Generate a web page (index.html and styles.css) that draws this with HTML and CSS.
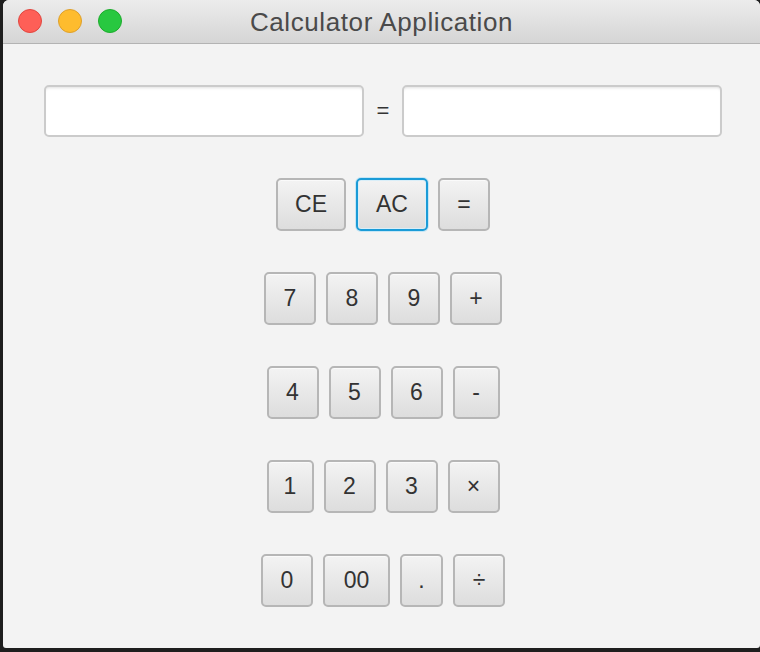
FILE: index.html
```html
<!DOCTYPE html>
<html>
<head>
<meta charset="utf-8">
<link rel="stylesheet" href="styles.css">
</head>
<body>
<div class="window">
  <div class="titlebar">
    <div class="lights">
      <span class="light red"></span>
      <span class="light yellow"></span>
      <span class="light green"></span>
    </div>
    <div class="title">Calculator Application</div>
    <div></div>
  </div>
  <div class="content">
    <div class="fields">
      <div class="field"></div>
      <span class="eq">=</span>
      <div class="field"></div>
    </div>
    <div class="row">
      <button class="key w70">CE</button>
      <button class="key w72 focused">AC</button>
      <button class="key">=</button>
    </div>
    <div class="row">
      <button class="key">7</button>
      <button class="key">8</button>
      <button class="key">9</button>
      <button class="key">+</button>
    </div>
    <div class="row">
      <button class="key">4</button>
      <button class="key">5</button>
      <button class="key">6</button>
      <button class="key w47">-</button>
    </div>
    <div class="row">
      <button class="key w47">1</button>
      <button class="key">2</button>
      <button class="key">3</button>
      <button class="key">×</button>
    </div>
    <div class="row">
      <button class="key">0</button>
      <button class="key w67">00</button>
      <button class="key w43">.</button>
      <button class="key">÷</button>
    </div>
  </div>
</div>
</body>
</html>
```

FILE: styles.css
```css
* { box-sizing: border-box; }
html, body {
  margin: 0;
  padding: 0;
  background: #1e1e1e;
  width: 760px;
  height: 652px;
  overflow: hidden;
  font-family: "Liberation Sans", Arial, sans-serif;
}
.window {
  margin-left: 3px;
  width: 757px;
  height: 648px;
  background: #f3f3f3;
  border-radius: 6px 6px 3px 3px;
  overflow: hidden;
}
.titlebar {
  height: 44px;
  display: grid;
  grid-template-columns: 1fr auto 1fr;
  align-items: center;
  background: linear-gradient(#ececec, #d5d5d5);
  border-bottom: 1px solid #b3b3b3;
}
.lights {
  display: flex;
  gap: 16px;
  padding-left: 15px;
  padding-bottom: 1px;
}
.light {
  width: 24px;
  height: 24px;
  border-radius: 50%;
  display: block;
}
.red { background: #fe5f57; border: 1px solid #e1463f; }
.yellow { background: #febc2e; border: 1px solid #dea02b; }
.green { background: #28c840; border: 1px solid #1dac2c; }
.title {
  font-size: 26px;
  letter-spacing: 0.6px;
  color: #4a4a4a;
  padding-top: 1px;
}
.content {
  padding: 41px 0 0 3px;
  display: flex;
  flex-direction: column;
  align-items: center;
}
.fields {
  display: flex;
  align-items: center;
  gap: 9px;
  margin-bottom: 41px;
}
.field {
  width: 320px;
  height: 52px;
  background: #fff;
  border: 2px solid #cbcbcb;
  border-radius: 5px;
  box-shadow: inset 0 3px 3px -2px rgba(0,0,0,0.12);
}
.eq {
  font-size: 22px;
  color: #333;
  width: 20px;
  text-align: center;
}
.row {
  display: flex;
  gap: 10px;
  margin-bottom: 41px;
}
.key {
  width: 52px;
  height: 53px;
  padding: 0;
  font-family: "Liberation Sans", Arial, sans-serif;
  font-size: 23px;
  color: #333;
  background: linear-gradient(#f3f3f3, #dddddd);
  border: 2px solid #b6b6b6;
  border-radius: 5px;
  box-shadow: inset 0 1px 0 #fafafa;
}
.w70 { width: 70px; }
.w72 { width: 72px; }
.w47 { width: 47px; }
.w67 { width: 67px; }
.w43 { width: 43px; }
.key.focused {
  border-color: #1a9bd7;
  box-shadow: 0 0 0 1px #c6e6f5, inset 0 0 0 1px #d9eef8;
}
```
